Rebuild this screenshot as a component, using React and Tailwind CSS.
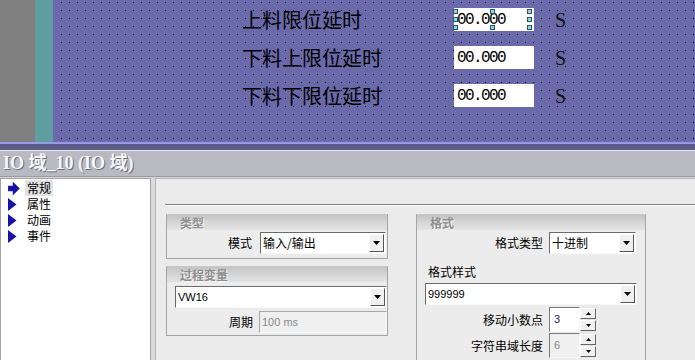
import React from "react";

const CJK = "font-['Noto_Sans_CJK_SC',sans-serif]";

function Handle({ className }) {
  return (
    <div
      className={`absolute w-[5px] h-[5px] border border-[#2e5656] bg-[#8ed2f4] ${className}`}
    />
  );
}

function CanvasRow({ label, selected }) {
  return (
    <div className="flex items-center h-[23px]">
      <div className={`w-[212px] text-[20px] leading-none text-black font-normal ${CJK}`}>
        {label}
      </div>
      <div className="relative w-[80px] h-[23px] bg-white flex items-center pl-[3px] font-['Liberation_Mono',monospace] text-[16px] tracking-[-1.6px] text-black">
        00.000
        {selected && (
          <>
            <Handle className="left-[-1px] top-[1px]" />
            <Handle className="left-[36px] top-[1px]" />
            <Handle className="left-[73px] top-[1px]" />
            <Handle className="left-[-1px] top-[9px]" />
            <Handle className="left-[73px] top-[9px]" />
            <Handle className="left-[-1px] top-[17px]" />
            <Handle className="left-[36px] top-[17px]" />
            <Handle className="left-[73px] top-[17px]" />
          </>
        )}
      </div>
      <div className="ml-[21px] font-['Liberation_Serif',serif] text-[20px] leading-none text-[#111]">
        S
      </div>
    </div>
  );
}

function DownArrow() {
  return (
    <svg width="7" height="4" viewBox="0 0 7 4">
      <path d="M0 0h7L3.5 4z" fill="#000" />
    </svg>
  );
}

function Combo({ value, className = "", latin }) {
  return (
    <div
      className={`flex h-[22px] bg-white border border-t-[#6a6a6a] border-l-[#6a6a6a] border-b-[#f8f8f8] border-r-[#f8f8f8] ${className}`}
    >
      <div
        className={`flex-1 flex items-center pl-[2px] text-black ${
          latin ? "text-[11px] font-['Liberation_Sans',sans-serif]" : `text-[12px] ${CJK}`
        }`}
      >
        {value}
      </div>
      <div className="w-[15px] my-[1px] mr-[1px] bg-[#f0f0f0] border border-t-[#ffffff] border-l-[#ffffff] border-b-[#555] border-r-[#555] flex items-center justify-center">
        <DownArrow />
      </div>
    </div>
  );
}

function SpinBtn({ up }) {
  return (
    <div className="flex-1 bg-[#f0f0f0] border border-t-white border-l-white border-b-[#666] border-r-[#666] flex items-center justify-center">
      <svg width="5" height="3" viewBox="0 0 5 3">
        {up ? <path d="M0 3h5L2.5 0z" fill="#000" /> : <path d="M0 0h5L2.5 3z" fill="#000" />}
      </svg>
    </div>
  );
}

function Spin({ value, disabled, className = "" }) {
  return (
    <div className={`flex w-[47px] h-[25px] ${className}`}>
      <div
        className={`w-[31px] flex items-center pl-[4px] text-[11px] font-['Liberation_Sans',sans-serif] border border-t-[#7a7a7a] border-l-[#7a7a7a] border-b-[#f8f8f8] border-r-[#f8f8f8] ${
          disabled ? "bg-[#f0f0f0] text-[#8a8a8a]" : "bg-white text-[#14245c]"
        }`}
      >
        {value}
      </div>
      <div className="w-[16px] flex flex-col gap-[1px] py-[1px] bg-[#e4e4e4]">
        <SpinBtn up />
        <SpinBtn />
      </div>
    </div>
  );
}

function Group({ title, children, className = "" }) {
  return (
    <div className={`border border-t-[#c8c8c8] border-[#a4a4a4] bg-[#ececec] ${className}`}>
      <div
        className={`h-[15px] bg-[linear-gradient(to_bottom,#c4c4c4,#dcdcdc_70%,#e2e2e2)] flex items-center pl-[13px] text-[12px] font-bold text-[#8e8e8e] [text-shadow:1px_1px_0_#f6f6f6] ${CJK}`}
      >
        {title}
      </div>
      {children}
    </div>
  );
}

function NavIcon({ active }) {
  return active ? (
    <svg width="12" height="13" viewBox="0 0 12 13">
      <path d="M0 4h5V0l6.5 6.5L5 13V9H0z" fill="#1212a8" stroke="#3a3ad0" strokeWidth="0.6" />
    </svg>
  ) : (
    <svg width="9" height="13" viewBox="0 0 9 13">
      <path d="M0 0l8.5 6.5L0 13z" fill="#1212a8" />
    </svg>
  );
}

function NavItem({ label, active }) {
  return (
    <div className="flex items-center h-[16px]">
      <div className="w-[24px] pl-[7px] flex items-center">
        <NavIcon active={active} />
      </div>
      <div
        className={`h-[16px] flex items-center px-[2px] text-[12px] text-black ${CJK} ${
          active ? "bg-[#e2e2e2]" : ""
        }`}
      >
        {label}
      </div>
    </div>
  );
}

export default function App() {
  return (
    <div className="w-[695px] h-[360px] overflow-hidden flex flex-col bg-[#dadada]">
      {/* Screen canvas */}
      <div className="flex h-[142px] shrink-0">
        <div className="w-[35px] bg-[#7f807f]" />
        <div className="w-[18px] bg-[#5f9ea0]" />
        <div className="relative flex-1 bg-[#6a6aaa] overflow-hidden">
          <svg className="absolute top-0 bottom-0 left-[8px] right-0 w-full h-full" aria-hidden="true">
            <defs>
              <pattern id="dots" width="8" height="8" patternUnits="userSpaceOnUse">
                <rect x="0" y="2" width="1" height="1" fill="#000" />
              </pattern>
            </defs>
            <rect width="100%" height="100%" fill="url(#dots)" />
          </svg>
          <div className="relative flex flex-col gap-[15px] pt-[8px] pl-[189px]">
            <CanvasRow label="上料限位延时" selected />
            <CanvasRow label="下料上限位延时" />
            <CanvasRow label="下料下限位延时" />
          </div>
        </div>
      </div>

      <div className="h-[2px] shrink-0 bg-[#9a9ae6]" />
      <div className="h-[6px] shrink-0 bg-[#5c5c8a]" />
      <div className="h-[1px] shrink-0 bg-[#ececf2]" />
      <div className="h-[25px] shrink-0 bg-[#b9b9c1] flex items-center pl-[3px] text-[18px] font-bold text-[#f6f6f6] font-['Liberation_Serif','Noto_Sans_CJK_SC',serif] [text-shadow:1px_1px_0_#6c6c80]">
        IO 域_10 (IO 域)
      </div>
      <div className="h-[1px] shrink-0 bg-[#9a9aa2]" />
      <div className="h-[1px] shrink-0 bg-[#d6d6d6]" />

      {/* Properties body */}
      <div className="flex flex-1 min-h-0">
        <div className="w-[151px] bg-white border-t border-l border-r border-[#a2a2a2] pt-[1px]">
          <NavItem label="常规" active />
          <NavItem label="属性" />
          <NavItem label="动画" />
          <NavItem label="事件" />
        </div>
        <div className="ml-[4px] flex-1 bg-[#ebebeb] border-t border-l border-[#b4b4b4] flex flex-col">
          <div className="mt-[25px] ml-[9px] h-[2px] border-t border-[#7c7c7c] border-b border-b-white" />
          <div className="mt-[8px] pl-[10px] flex gap-[28px] items-start">
            {/* Left column */}
            <div className="w-[222px] flex flex-col gap-[7px]">
              <Group title="类型">
                <div className="h-[28px] flex items-start pt-[2px]">
                  <div className={`w-[85px] text-right text-[12px] text-black leading-[22px] ${CJK}`}>
                    模式
                  </div>
                  <Combo value="输入/输出" className="ml-[8px] w-[126px]" />
                </div>
              </Group>
              <Group title="过程变量">
                <div className="h-[53px] flex flex-col pt-[4px]">
                  <Combo value="VW16" latin className="ml-[8px] w-[212px]" />
                  <div className="mt-[3px] flex items-center h-[22px]">
                    <div className={`w-[86px] text-right text-[12px] text-black ${CJK}`}>周期</div>
                    <div className="ml-[6px] w-[128px] h-[22px] bg-[#f0f0f0] border border-t-[#a8a8a8] border-l-[#a8a8a8] border-b-[#fafafa] border-r-[#fafafa] flex items-center pl-[2px] text-[11px] text-[#8a8a8a] font-['Liberation_Sans',sans-serif]">
                      100 ms
                    </div>
                  </div>
                </div>
              </Group>
            </div>

            {/* Right column */}
            <Group title="格式" className="w-[230px] h-[160px] border-b-0">
              <div className="flex flex-col">
                <div className="mt-[2px] flex items-center h-[22px]">
                  <div className={`w-[126px] text-right text-[12px] text-black ${CJK}`}>格式类型</div>
                  <Combo value="十进制" className="ml-[6px] w-[87px]" />
                </div>
                <div className={`mt-[9px] h-[17px] flex items-center pl-[11px] text-[12px] text-black ${CJK}`}>
                  格式样式
                </div>
                <Combo value="999999" latin className="mt-[3px] ml-[8px] w-[212px]" />
                <div className="mt-[2px] flex items-center">
                  <div className={`w-[126px] text-right text-[12px] text-black ${CJK}`}>移动小数点</div>
                  <Spin value="3" className="ml-[6px]" />
                </div>
                <div className="mt-[1px] flex items-center">
                  <div className={`w-[126px] text-right text-[12px] text-black ${CJK}`}>字符串域长度</div>
                  <Spin value="6" disabled className="ml-[6px]" />
                </div>
              </div>
            </Group>
          </div>
        </div>
      </div>
    </div>
  );
}
